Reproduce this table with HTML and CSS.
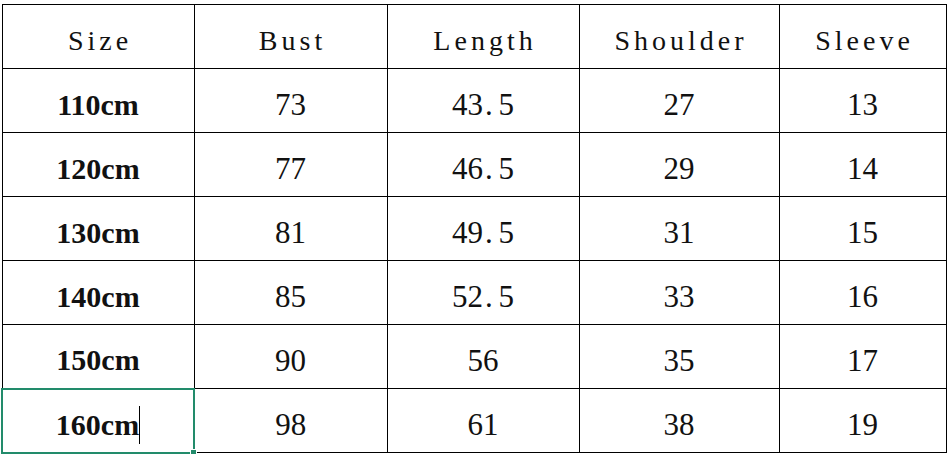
FILE: index.html
```html
<!DOCTYPE html>
<html>
<head>
<meta charset="utf-8">
<link rel="stylesheet" href="styles.css">
</head>
<body>
<table class="sheet">
  <colgroup>
    <col class="c1"><col class="c2"><col class="c3"><col class="c4"><col class="c5">
  </colgroup>
  <tr class="head">
    <td>Size</td><td>Bust</td><td>Length</td><td>Shoulder</td><td>Sleeve</td>
  </tr>
  <tr>
    <td class="size">110cm</td><td>73</td><td>43<span class="dot">.</span>5</td><td>27</td><td>13</td>
  </tr>
  <tr>
    <td class="size">120cm</td><td>77</td><td>46<span class="dot">.</span>5</td><td>29</td><td>14</td>
  </tr>
  <tr>
    <td class="size">130cm</td><td>81</td><td>49<span class="dot">.</span>5</td><td>31</td><td>15</td>
  </tr>
  <tr>
    <td class="size">140cm</td><td>85</td><td>52<span class="dot">.</span>5</td><td>33</td><td>16</td>
  </tr>
  <tr>
    <td class="size">150cm</td><td>90</td><td>56</td><td>35</td><td>17</td>
  </tr>
  <tr>
    <td class="size selected"><span class="caret-wrap">160cm<span class="caret"></span></span><span class="handle"></span></td><td>98</td><td>61</td><td>38</td><td>19</td>
  </tr>
</table>
</body>
</html>
```
FILE: styles.css
```css
html, body {
  margin: 0;
  padding: 0;
  background: #ffffff;
}
body {
  padding: 4px 0 0 1px;
}
.sheet {
  border-collapse: collapse;
  table-layout: fixed;
  width: 944px;
}
.c1 { width: 192px; }
.c2 { width: 193px; }
.c3 { width: 192px; }
.c4 { width: 200px; }
.c5 { width: 167px; }
.sheet td {
  border: 1px solid #000;
  height: 64px;
  padding: 8px 0 0 0;
  text-align: center;
  vertical-align: middle;
  font-family: "Liberation Serif", "Times New Roman", serif;
  font-size: 31px;
  color: #111;
  line-height: 1;
  box-sizing: border-box;
}
.sheet .head td {
  font-size: 28px;
  letter-spacing: 4px;
  padding-top: 8px;
  padding-left: 4px;
}
.sheet td.size {
  font-weight: bold;
  font-size: 30px;
}
.dot {
  display: inline-block;
  width: 0.5em;
  text-align: left;
  padding-left: 2px;
  box-sizing: border-box;
}
.sheet td.selected {
  position: relative;
  border: 2px solid #228b6b;
}
.caret-wrap {
  display: inline-flex;
  align-items: center;
}
.caret {
  display: inline-block;
  width: 1px;
  height: 38px;
  background: #000;
}
.handle {
  position: absolute;
  right: -4px;
  bottom: -4px;
  width: 5px;
  height: 5px;
  background: #228b6b;
  border: 1px solid #fff;
}
```
